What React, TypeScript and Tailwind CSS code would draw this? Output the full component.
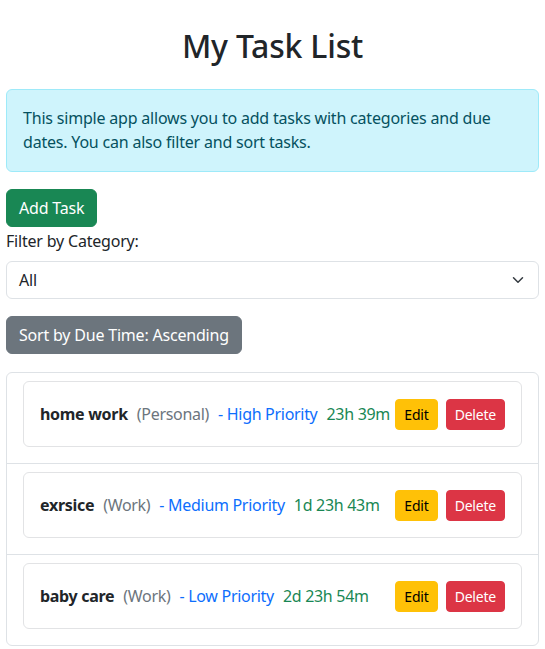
import React from "react";

type Task = { name: string; cat: string; pri: string; due: string };

const tasks: Task[] = [
  { name: "home work", cat: "(Personal)", pri: "- High Priority", due: "23h 39m" },
  { name: "exrsice", cat: "(Work)", pri: "- Medium Priority", due: "1d 23h 43m" },
  { name: "baby care", cat: "(Work)", pri: "- Low Priority", due: "2d 23h 54m" },
];

export default function App() {
  return (
    <div className="min-h-screen bg-white px-[6px] pt-[28px] text-[16px] text-[#212529] font-['Noto_Sans',sans-serif] tracking-[-0.2px]">
      <h1 className="mb-[25px] text-center text-[32px] font-medium leading-[36px]">My Task List</h1>
      <div className="mb-[17px] rounded-[6px] border border-[#9eeaf9] bg-[#cff4fc] px-4 pb-[17px] pt-4 leading-6 text-[#055160]">
        This simple app allows you to add tasks with categories and due dates. You can also filter and sort tasks.
      </div>
      <div className="flex">
        <button className="h-[38px] rounded-[6px] border border-[#198754] bg-[#198754] px-3 leading-6 text-white">
          Add Task
        </button>
      </div>
      <label className="mb-[8px] mt-[2px] block leading-6">Filter by Category:</label>
      <div className="flex h-[38px] items-center justify-between rounded-[6px] border border-[#dee2e6] pl-3 pr-3">
        <span className="leading-6">All</span>
        <svg width="16" height="12" viewBox="0 0 16 16" fill="none">
          <path d="m2 5 6 6 6-6" stroke="#343a40" strokeWidth="2" strokeLinecap="round" strokeLinejoin="round" />
        </svg>
      </div>
      <div className="mt-[17px] flex">
        <button className="h-[38px] rounded-[6px] border border-[#6c757d] bg-[#6c757d] px-3 leading-6 text-white">
          Sort by Due Time: Ascending
        </button>
      </div>
      <ul className="mt-[18px] rounded-[6px] border border-[#dee2e6]">
        {tasks.map((t, i) => (
          <li key={i} className={`px-4 py-2 ${i > 0 ? "border-t border-[#dee2e6]" : ""}`}>
            <div className="mb-2 flex min-h-[66px] items-center justify-between rounded-[6px] border border-[#e2e3e5] px-4">
              <div className="flex items-center gap-[9px] whitespace-nowrap leading-6 tracking-[-0.3px]">
                <strong className="font-bold">{t.name}</strong>
                <span className="text-[#6c757d]">{t.cat}</span>
                <span className="text-[#0d6efd]">{t.pri}</span>
                <span className="text-[#198754]">{t.due}</span>
              </div>
              <div className="flex shrink-0 items-center gap-2">
                <button className="h-[31px] rounded-[4px] border border-[#ffc107] bg-[#ffc107] px-2 text-[14px] leading-[21px] text-black">
                  Edit
                </button>
                <button className="h-[31px] rounded-[4px] border border-[#dc3545] bg-[#dc3545] px-2 text-[14px] leading-[21px] text-white">
                  Delete
                </button>
              </div>
            </div>
          </li>
        ))}
      </ul>
    </div>
  );
}
